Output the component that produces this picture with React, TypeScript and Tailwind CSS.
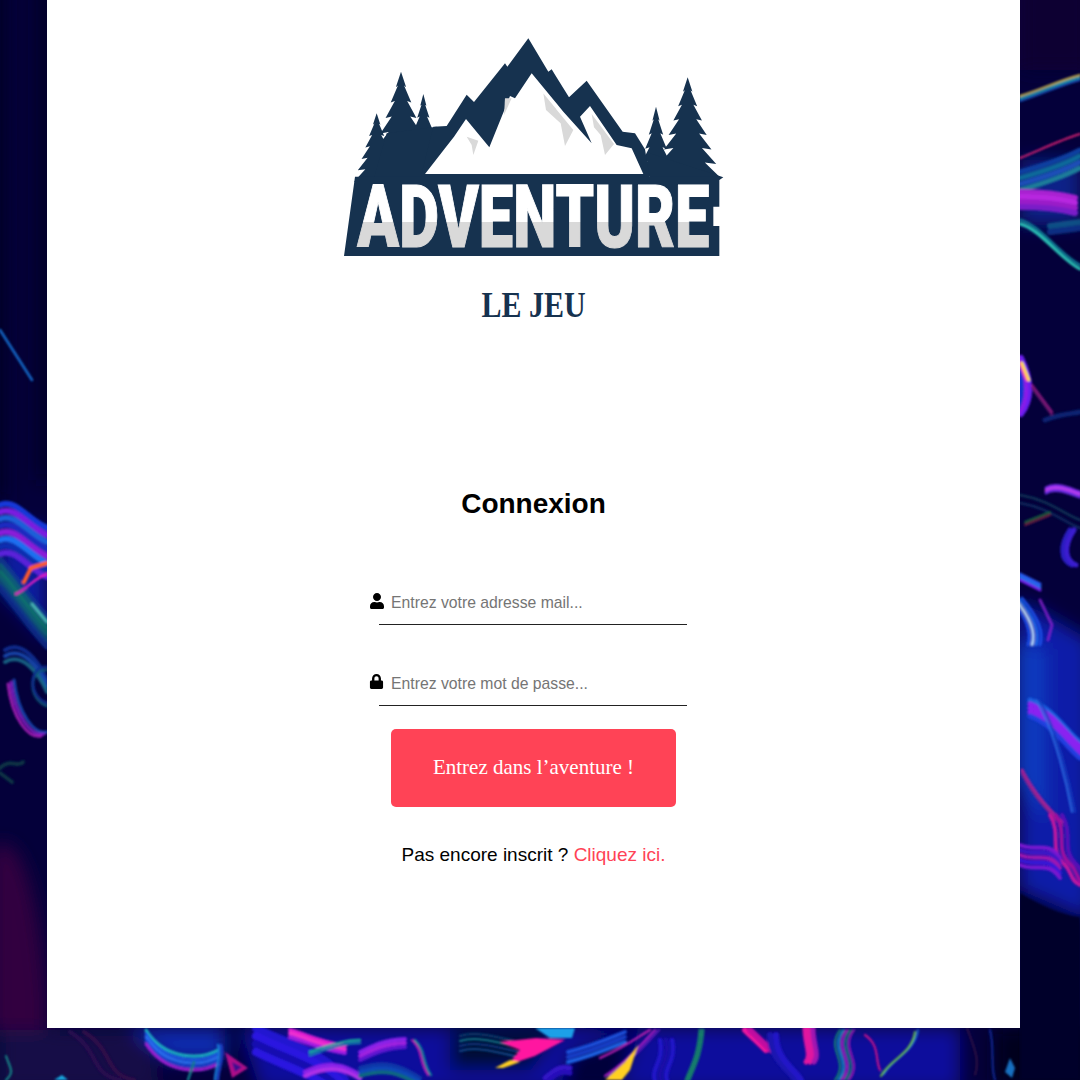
import { FaUser, FaLock } from "react-icons/fa";

const NAVY = "#16324f";

function tree(cx: number, top: number, bottom: number, half: number, tiers: number) {
  const left: string[] = [];
  const right: string[] = [];
  const h = (bottom - top) / tiers;
  for (let i = 0; i < tiers; i++) {
    const y = top + h * (i + 1);
    const w = (half * (i + 1)) / tiers;
    const inner = w * 0.6;
    right.push(`${cx + w},${y}`, `${cx + inner},${y - h * 0.1}`);
    left.unshift(`${cx - inner},${y - h * 0.1}`, `${cx - w},${y}`);
  }
  return [`${cx},${top}`, ...right.slice(0, -1), ...left.slice(1)].join(" ");
}

function Logo() {
  return (
    <svg viewBox="0 0 1230 780" className="w-[410px] h-[260px] ml-[3px] shrink-0">
      <defs>
        <linearGradient id="lettering" gradientUnits="userSpaceOnUse" x1="0" y1="-64" x2="0" y2="-24">
          <stop offset="0.5" stopColor="#ffffff" />
          <stop offset="0.5" stopColor="#d9d9d9" />
        </linearGradient>
      </defs>
      <polygon points={tree(213, 155, 480, 108, 7)} fill={NAVY} />
      <polygon points={tree(280, 222, 400, 46, 5)} fill={NAVY} />
      <polygon points={tree(140, 280, 485, 68, 6)} fill={NAVY} />
      <polygon points={tree(1073, 172, 475, 100, 7)} fill={NAVY} />
      <polygon points={tree(978, 260, 470, 54, 5)} fill={NAVY} />
      <polygon points="170,340 320,320 320,480 130,480" fill={NAVY} />
      <polygon points="960,400 1180,472 1168,480 960,480" fill={NAVY} />
      <polygon
        points="270,480 310,320 350,318 410,224 432,246 525,130 532,140 595,55 655,155 665,148 717,232 770,182 878,335 915,340 945,388 960,480"
        fill={NAVY}
      />
      <polygon
        points="285,462 345,385 372,350 408,297 478,382 540,228 555,235 605,160 700,275 785,370 750,290 780,258 860,375 905,385 940,462"
        fill="#ffffff"
      />
      <polygon points="410,350 445,362 430,405 425,375" fill="#d9d9d9" />
      <polygon points="525,235 545,235 522,285" fill="#d9d9d9" />
      <polygon points="615,190 730,330 705,378 692,310 648,270 640,220" fill="#d9d9d9" />
      <polygon points="785,282 852,372 825,405 812,345 792,322" fill="#d9d9d9" />
      <polygon
        points="42,708 75,470 1168,470 1168,560 1150,560 1150,618 1168,618 1168,708"
        fill={NAVY}
      />
      <text
        transform="translate(82 680) scale(1 1.65)"
        fontFamily="Roboto, 'Liberation Sans', sans-serif"
        fontWeight="900"
        fontSize="160"
        textLength="1056"
        lengthAdjust="spacingAndGlyphs"
        fill="url(#lettering)"
        stroke="url(#lettering)"
        strokeWidth="2"
      >
        ADVENTURE
      </text>
    </svg>
  );
}

type Band = { d: string; colors: string[]; dx?: number; dy?: number; w?: number; o?: number };

const bands: Band[] = [
  { d: "M0 505 C15 498 28 520 47 528", colors: ["#1438d8", "#7a1fe0", "#1f5fd8", "#1a2ac0", "#8a1fd8", "#1f6ff0", "#0f2fb0", "#5a20d8"], dy: 7, w: 6 },
  { d: "M0 560 C14 575 30 600 47 618", colors: ["#0b3f90", "#0d6a70", "#0d7a6a", "#0b5a78", "#0a3090"], dy: 7, w: 7, o: 0.75 },
  { d: "M5 650 C22 640 38 660 47 680", colors: ["#123aa8", "#1a5ac8", "#1c7d9a"], dy: 6, w: 4, o: 0.75 },
  { d: "M14 680 C18 715 35 735 47 732", colors: ["#1a4cc0", "#8a20d0", "#b020c0"], dx: -3, dy: 2, w: 3, o: 0.85 },
  { d: "M47 706 C28 700 28 668 47 670", colors: ["#0e5a78", "#0d2a90"], dy: -3, w: 3, o: 0.8 },
  { d: "M0 768 C10 758 18 768 23 762 M0 773 L12 782", colors: ["#0b4a48"], w: 4, o: 0.7 },
  { d: "M1020 96 C1040 90 1060 80 1080 75", colors: ["#c9b44a", "#1ea7b8", "#1a50b8"], dy: 2.5, w: 2 },
  { d: "M1020 158 C1040 150 1060 140 1080 134", colors: ["#d01f70"], w: 2 },
  { d: "M1020 172 C1045 165 1065 158 1080 150", colors: ["#0d40a0", "#116a9a", "#1a50b8", "#1c7d9a"], dy: 6, w: 5 },
  { d: "M1020 192 C1045 192 1060 194 1075 198", colors: ["#a820d0", "#b828e0", "#9a1ec8", "#7a1ec8"], dy: 5, w: 6 },
  { d: "M1020 220 C1040 225 1060 255 1080 265", colors: ["#0f6f8f", "#2cc4b8"], dy: 4, w: 3 },
  { d: "M1050 226 L1080 222", colors: ["#0d5f8f", "#123a90"], dy: 6, w: 6, o: 0.8 },
  { d: "M1021 358 C1032 380 1032 400 1021 414", colors: ["#6a1ff0", "#8a1fe8", "#1430d0"], dx: -4, w: 6 },
  { d: "M1020 363 L1027 380", colors: ["#ff5aa0", "#ffe04a"], dx: 2, w: 3 },
  { d: "M1032 385 L1052 412", colors: ["#a01a88", "#701870"], dy: 3, w: 2.5, o: 0.8 },
  { d: "M1045 420 C1060 414 1070 414 1080 412", colors: ["#0b2a80"], w: 5, o: 0.8 },
  { d: "M1046 488 C1055 482 1068 488 1080 492", colors: ["#7a2ae8", "#c040f0", "#6a2ae0"], dy: 2.5, w: 3 },
  { d: "M1020 495 C1050 500 1065 515 1080 520", colors: ["#0d3a5a", "#0d3060"], dy: 8, w: 2.5, o: 0.85 },
  { d: "M1025 522 L1050 512", colors: ["#16603a", "#702040"], dy: 3, w: 2 },
  { d: "M1070 530 C1060 545 1060 560 1072 565", colors: ["#2a1fc0", "#3a1fd0"], dx: 4, w: 5 },
  { d: "M1020 574 L1040 584", colors: ["#2a5af0", "#2470f0", "#7020e8"], dy: 3, w: 3 },
  { d: "M1022 598 C1034 612 1045 630 1040 645", colors: ["#1a50e8", "#2070f0", "#c8e8ff", "#1a50e8"], dx: -4, w: 2.6 },
  { d: "M1040 600 L1052 625 L1048 640", colors: ["#8a20d0"], w: 3, o: 0.8 },
  { d: "M1030 700 C1055 710 1065 730 1080 742", colors: ["#1a60e0", "#8a20f0", "#8a20f0", "#8a20f0", "#2040e0"], dy: 4, w: 5 },
  { d: "M1036 700 C1055 730 1068 790 1072 812", colors: ["#2a6ae0", "#143cc0"], dx: 3, w: 2 },
  { d: "M1022 770 C1035 795 1050 810 1062 822", colors: ["#b0209a", "#8a2090"], dy: 3, w: 3 },
  { d: "M1050 815 C1062 835 1048 850 1065 865 C1072 872 1070 880 1080 885", colors: ["#c012a0", "#a010a0", "#5a10b8"], dx: 6, w: 4 },
  { d: "M1020 845 C1036 852 1048 840 1060 858", colors: ["#7a18d0", "#4018c8", "#a012b0", "#3a18d8", "#7a18d0"], dy: 5, w: 4 },

  { d: "M146 1030 C165 1060 200 1060 218 1050", colors: ["#1cb0c0", "#1a56e0", "#2a70f0", "#1a40d0", "#a01fd0"], dy: 3.5, w: 3 },
  { d: "M218 1045 C222 1055 215 1070 215 1080", colors: ["#1878d8", "#1a40c8"], dx: 3, w: 2.5 },
  { d: "M194 1062 L188 1080", colors: ["#167a88"], w: 2.5 },
  { d: "M70 1032 C100 1050 90 1075 120 1080", colors: ["#2a0a50", "#300a4a"], dx: 14, w: 4 },
  { d: "M6 1056 C10 1068 15 1072 6 1080", colors: ["#148a8a"], w: 2 },
  { d: "M256 1028 C290 1045 330 1055 345 1080", colors: ["#2414d0", "#2a18e0", "#1410b0", "#2a18e0"], dy: 8, w: 8 },
  { d: "M290 1030 C310 1036 320 1042 345 1046", colors: ["#e01fd0", "#f030d0", "#a01fe0"], dy: 3.5, w: 4 },
  { d: "M310 1052 C330 1045 345 1040 360 1040", colors: ["#19a89a", "#1478a8"], dy: 3, w: 2.5 },
  { d: "M305 1072 C330 1060 345 1065 360 1075", colors: ["#8a20e8", "#b030e8"], dy: 4, w: 4 },
  { d: "M360 1052 C375 1045 385 1040 405 1039", colors: ["#8a20e8", "#a020e0", "#6018d0"], dy: 4, w: 4 },
  { d: "M412 1040 C424 1052 418 1060 428 1075", colors: ["#c01ab0", "#108a9a"], dx: 3, w: 2.2 },
  { d: "M360 1068 C385 1060 400 1065 420 1078", colors: ["#1038a8", "#1048b8", "#0e6a80"], dy: 4, w: 4 },
  { d: "M460 1036 C480 1030 505 1040 520 1042", colors: ["#0b4070", "#0f7a8a", "#0c3a80", "#0f4a8a"], dy: 5, w: 2 },
  { d: "M545 1078 C555 1070 560 1065 570 1068", colors: ["#3414c8", "#2810b8"], dy: 5, w: 5 },
  { d: "M568 1052 C595 1045 610 1038 625 1032", colors: ["#1a50d8", "#1840c8", "#1a60e0"], dy: 5, w: 4 },
  { d: "M600 1058 C630 1045 640 1035 650 1030", colors: ["#b81fb0"], w: 2.2 },
  { d: "M605 1076 C630 1060 645 1040 655 1030", colors: ["#a81fc0", "#6018b8"], dx: 4, w: 2.2 },
  { d: "M660 1040 C665 1060 650 1070 655 1080", colors: ["#2018c8", "#1a10a8", "#2018c8"], dx: 6, w: 4.5 },
  { d: "M700 1030 C698 1055 692 1065 686 1080", colors: ["#14806a", "#14806a"], dx: 3, w: 3 },
  { d: "M745 1030 L766 1050", colors: ["#ee12a0", "#c010a0"], dx: 5, w: 6 },
  { d: "M805 1028 C805 1045 812 1055 806 1062", colors: ["#e012a0", "#e012a0", "#a014b0"], dx: 4, w: 5 },
  { d: "M770 1035 C770 1060 790 1070 795 1080", colors: ["#1c18b0", "#2418c8"], dx: 6, w: 6 },
  { d: "M840 1030 C825 1050 850 1060 835 1080", colors: ["#108870", "#18a0c0", "#c01fc0", "#108870", "#a018b0"], dx: 3.5, w: 2 },
  { d: "M865 1035 C880 1045 875 1060 880 1070", colors: ["#c0108a"], w: 2.2 },
  { d: "M884 1074 C892 1058 915 1052 918 1030", colors: ["#1460c8", "#68c040"], dx: -3, dy: 2, w: 2 },
  { d: "M967 1028 C975 1050 980 1060 975 1075", colors: ["#5a2048"], w: 1 },
  { d: "M990 1030 C995 1050 990 1065 995 1080", colors: ["#0f2a98"], w: 2 },
];

function Background() {
  return (
    <svg viewBox="0 0 1080 1080" className="absolute inset-0 w-[1080px] h-[1080px]" aria-hidden="true">
      <defs>
        <filter id="soft" filterUnits="userSpaceOnUse" x="0" y="0" width="1080" height="1080">
          <feGaussianBlur stdDeviation="1.2" />
        </filter>
        <filter id="softer" filterUnits="userSpaceOnUse" x="-40" y="-40" width="1160" height="1160">
          <feGaussianBlur stdDeviation="9" />
        </filter>
      </defs>
      <rect width="1080" height="1080" fill="#04003a" />
      <g filter="url(#softer)">
        <rect x="-20" y="-20" width="26" height="520" fill="#030028" />
        <rect x="38" y="-20" width="14" height="500" fill="#030024" />
        <path d="M0 520 L47 530 V640 L0 590 Z" fill="#0a1ea0" />
        <path d="M-10 850 C20 820 40 900 47 1000 L47 1030 L-10 1030 Z" fill="#30063f" />
        <path d="M0 1030 H150 L160 1090 H0 Z" fill="#160a46" />
        <path d="M1020 -20 H1090 V70 H1020 Z" fill="#0a0030" />
        <path d="M1020 160 H1080 V225 H1020 Z" fill="#0b2488" />
        <path d="M1020 600 L1090 640 V920 L1020 890 Z" fill="#0b1ea8" />
        <path d="M1015 640 L1045 650 V820 L1015 780 Z" fill="#0d3ac0" />
        <path d="M995 1028 H1090 V1090 H995 Z" fill="#02001e" />
        <path d="M130 1028 H225 V1060 H170 Z" fill="#0a2ab0" />
        <path d="M240 1028 H960 V1090 H260 Z" fill="#07109c" />
        <path d="M450 1030 H560 L530 1070 H450 Z" fill="#020830" />
        <path d="M570 1050 L640 1030 L620 1090 L560 1090 Z" fill="#04043a" />
      </g>
      <g filter="url(#soft)">
        <g fill="none" strokeLinecap="round">
          {bands.flatMap((b, i) =>
            b.colors.map((c, j) => (
              <path
                key={`${i}-${j}`}
                d={b.d}
                stroke={c}
                strokeWidth={b.w ?? 3}
                opacity={b.o ?? 1}
                transform={`translate(${(b.dx ?? 0) * j} ${(b.dy ?? 0) * j})`}
              />
            ))
          )}
          <path d="M24 582 L31 568 L47 563" stroke="#ff5a2a" strokeWidth="4" />
          <path d="M16 594 C26 590 34 578 47 574" stroke="#d81fc0" strokeWidth="2.5" />
          <path d="M0 330 L32 380" stroke="#1668c8" strokeWidth="2.5" />
          <path d="M32 604 L47 622" stroke="#46b4b0" strokeWidth="3" />
        </g>
        <path d="M1020 893 C1040 905 1060 915 1080 917 V1080 H1020 Z" fill="#03002a" />
        <polygon points="225,1052 232,1078 248,1068" fill="#b0108a" />
        <polygon points="232,1062 235,1072 242,1067" fill="#3a0a90" />
        <polygon points="500,1042 536,1038 565,1040 535,1056 508,1065 520,1050" fill="#ff12a0" />
        <polygon points="495,1068 510,1060 520,1062 503,1068" fill="#ffd020" />
        <polygon points="535,1028 575,1028 572,1038 550,1038" fill="#1aa0e8" />
        <polygon points="605,1080 625,1062 638,1045 630,1070 622,1080" fill="#ffd020" />
        <polygon points="1005,1072 1010,1058 1015,1068 1012,1078" fill="#1870c0" />
        <polygon points="54,1080 62,1075 68,1080" fill="#18a8e0" />
      </g>
    </svg>
  );
}

export default function App() {
  return (
    <div className="relative w-[1080px] h-[1080px] overflow-hidden font-['Liberation_Sans',Arial,sans-serif]">
      <Background />
      <main className="relative ml-[47px] w-[973px] h-[1028px] bg-white pt-[20px] flex flex-col items-center">
        <Logo />
        <div className="mt-[7px] h-[36px] leading-[36px] font-['Liberation_Serif',serif] font-bold text-[30px] scale-y-[1.2] text-[#16324f]">
          LE JEU
        </div>
        <h1 className="mt-[165px] h-[32px] leading-[32px] text-[28px] font-bold text-black">Connexion</h1>
        <label className="relative mt-[64px] ml-[-1px] block w-[308px]">
          <FaUser className="absolute left-[-10px] top-[9px] text-[16px] text-black" />
          <input
            type="text"
            placeholder="Entrez votre adresse mail..."
            className="block w-full h-[41px] pl-[12px] pb-[2px] border-b border-[#222222] text-[15.75px] outline-none placeholder:text-[#757575]"
          />
        </label>
        <label className="relative mt-[40px] ml-[-1px] block w-[308px]">
          <FaLock className="absolute left-[-10px] top-[9px] text-[15px] text-black" />
          <input
            type="password"
            placeholder="Entrez votre mot de passe..."
            className="block w-full h-[41px] pl-[12px] pb-[2px] border-b border-[#222222] text-[15.75px] outline-none placeholder:text-[#757575]"
          />
        </label>
        <button className="mt-[23px] w-[285px] h-[78px] rounded-[5px] bg-[#ff4356] text-white font-['Liberation_Serif',serif] text-[21px]">
          Entrez dans l’aventure !
        </button>
        <p className="mt-[36px] h-[24px] leading-[24px] text-[19px] text-black">
          Pas encore inscrit ? <a className="text-[#ff4356]">Cliquez ici.</a>
        </p>
      </main>
    </div>
  );
}
